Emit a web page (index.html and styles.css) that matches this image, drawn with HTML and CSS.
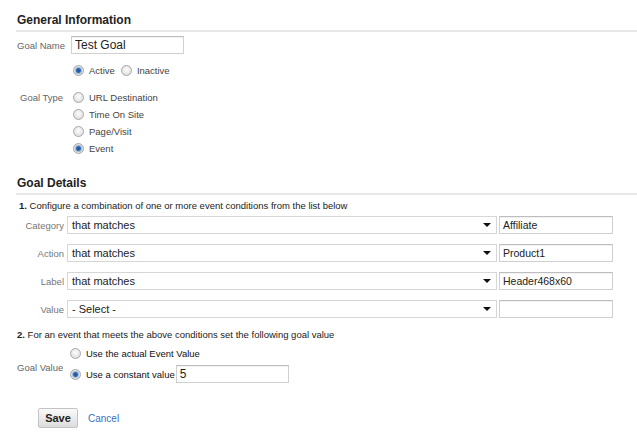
FILE: index.html
```html
<!DOCTYPE html>
<html lang="en">

<head>
    <meta charset="UTF-8">
    <title>Goal Settings</title>
    <link rel="stylesheet" href="styles.css">
</head>

<body>
    <div class="page">
        <h2 class="section-title">General Information</h2>

        <div class="row name-row">
            <span class="label">Goal Name</span>
            <div class="input name-input">Test Goal</div>
        </div>

        <div class="status-row">
            <span class="radio checked"></span><span class="opt">Active</span>
            <span class="radio"></span><span class="opt">Inactive</span>
        </div>

        <div class="type-block">
            <span class="label type-label">Goal Type</span>
            <div class="options">
                <div class="option"><span class="radio"></span><span class="opt">URL Destination</span></div>
                <div class="option"><span class="radio"></span><span class="opt">Time On Site</span></div>
                <div class="option"><span class="radio"></span><span class="opt">Page/Visit</span></div>
                <div class="option"><span class="radio checked"></span><span class="opt">Event</span></div>
            </div>
        </div>

        <h2 class="section-title details-title">Goal Details</h2>

        <p class="step"><b>1.</b> Configure a combination of one or more event conditions from the list below</p>

        <div class="conditions">
            <div class="cond-row">
                <span class="cond-label">Category</span>
                <div class="select"><span>that matches</span><span class="arrow"></span></div>
                <div class="input cond-input">Affiliate</div>
            </div>
            <div class="cond-row">
                <span class="cond-label">Action</span>
                <div class="select"><span>that matches</span><span class="arrow"></span></div>
                <div class="input cond-input">Product1</div>
            </div>
            <div class="cond-row">
                <span class="cond-label">Label</span>
                <div class="select"><span>that matches</span><span class="arrow"></span></div>
                <div class="input cond-input">Header468x60</div>
            </div>
            <div class="cond-row">
                <span class="cond-label">Value</span>
                <div class="select"><span>- Select -</span><span class="arrow"></span></div>
                <div class="input cond-input"></div>
            </div>
        </div>

        <p class="step step-two"><b>2.</b> For an event that meets the above conditions set the following goal value</p>

        <div class="value-block">
            <span class="label">Goal Value</span>
            <div class="value-options">
                <div class="value-option"><span class="radio"></span><span class="opt dark">Use the actual Event Value</span></div>
                <div class="value-option second"><span class="radio checked"></span><span class="opt dark">Use a constant value</span><div class="input const-input">5</div></div>
            </div>
        </div>

        <div class="actions">
            <button class="save-btn">Save</button>
            <a class="cancel" href="#">Cancel</a>
        </div>
    </div>
</body>

</html>
```

FILE: styles.css
```css
body {
    margin: 0;
    background-color: #fff;
    font-family: "Liberation Sans", Arial, sans-serif;
    color: #333;
}

.page {
    padding-left: 16px;
}

.section-title {
    margin: 0;
    padding: 12px 0 2px 1px;
    font-size: 12px;
    line-height: 16px;
    font-weight: bold;
    color: #222;
    border-bottom: 2px solid #e8e8e8;
}

.label {
    font-size: 9.5px;
    color: #666;
}

.opt {
    font-size: 9.5px;
    color: #444;
    margin-left: 5px;
}

.opt.dark {
    color: #111;
}

.input {
    box-sizing: border-box;
    height: 18px;
    border: 1px solid #d0d0d0;
    border-top-color: #bdbdbd;
    box-shadow: inset 0 1px 1px rgba(0, 0, 0, 0.06);
    background-color: #fff;
    padding: 0 3px;
    font-size: 11px;
    line-height: 16px;
    color: #222;
}

.radio {
    display: inline-block;
    box-sizing: border-box;
    width: 11px;
    height: 11px;
    border: 1px solid #a8a8a8;
    border-radius: 50%;
    background: radial-gradient(circle at 50% 40%, #fdfdfd, #d6d6d6);
    vertical-align: middle;
}

.radio.checked {
    background: radial-gradient(circle, #1b4f91 0, #2f6db5 2px, #9fb9d8 3px, #e2e2e2 4px, #c8c8c8);
}

.row {
    display: flex;
    align-items: center;
}

.name-row {
    margin-top: 4px;
}

.name-row .label {
    width: 54px;
    padding-left: 1px;
}

.name-input {
    width: 113px;
    font-size: 12px;
}

.status-row {
    margin-top: 9px;
    padding-left: 57px;
    height: 14px;
    display: flex;
    align-items: center;
}

.status-row .opt {
    margin-right: 6px;
}

.type-block {
    display: flex;
    margin-top: 12px;
}

.type-label {
    width: 53px;
    padding-left: 4px;
    padding-top: 2px;
    line-height: 14px;
}

.option {
    display: flex;
    align-items: center;
    height: 17px;
}

.details-title {
    margin-top: 6px;
}

.step {
    margin: 4px 0 0 3px;
    font-size: 9.5px;
    line-height: 14px;
    color: #222;
}

.conditions {
    margin-top: 3px;
}

.cond-row {
    display: flex;
    align-items: center;
    margin-bottom: 10px;
}

.cond-label {
    width: 48px;
    padding-right: 3px;
    text-align: right;
    font-size: 9.5px;
    color: #777;
}

.select {
    box-sizing: border-box;
    width: 430px;
    height: 18px;
    border: 1px solid #d6d6d6;
    background-color: #fff;
    display: flex;
    align-items: center;
    justify-content: space-between;
    padding: 0 5px 0 4px;
    font-size: 11px;
    color: #222;
}

.arrow {
    width: 0;
    height: 0;
    border-left: 4px solid transparent;
    border-right: 4px solid transparent;
    border-top: 4px solid #111;
}

.cond-input {
    width: 114px;
    margin-left: 2px;
    font-size: 10.5px;
}

.step-two {
    margin-top: 0;
    margin-left: 1px;
}

.value-block {
    display: flex;
    align-items: center;
    margin-top: 4px;
}

.value-block .label {
    width: 53px;
    padding-left: 1px;
    margin-top: 4px;
}

.value-option {
    display: flex;
    align-items: center;
    height: 14px;
}

.value-option.second {
    height: 20px;
    margin-top: 4px;
}

.const-input {
    width: 113px;
    margin-left: 1px;
    font-size: 12px;
}

.actions {
    display: flex;
    align-items: center;
    margin-top: 24px;
    padding-left: 22px;
}

.save-btn {
    width: 40px;
    height: 20px;
    border: 1px solid #c4c4c4;
    border-radius: 2px;
    background: linear-gradient(#fafafa, #dcdcdc);
    font-family: "Liberation Sans", Arial, sans-serif;
    font-size: 11px;
    font-weight: bold;
    color: #222;
    padding: 0;
}

.cancel {
    margin-left: 10px;
    font-size: 10px;
    color: #3a6fc1;
    text-decoration: none;
}
```
